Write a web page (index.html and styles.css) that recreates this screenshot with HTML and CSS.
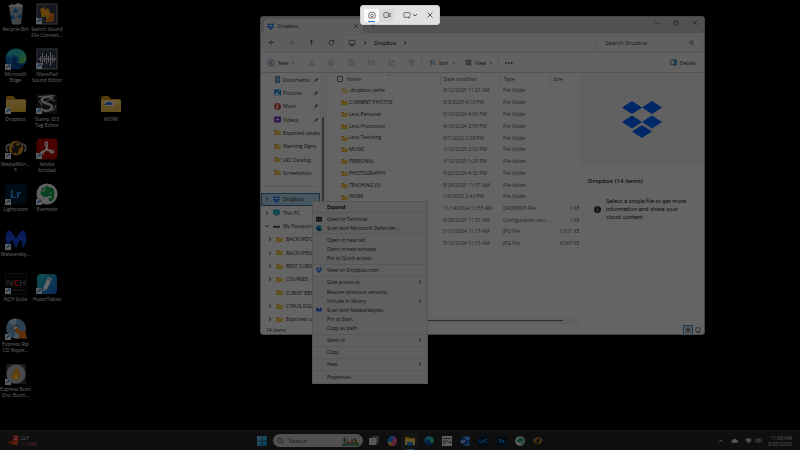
FILE: index.html
```html
<!DOCTYPE html>
<html lang="en">
<head>
<meta charset="utf-8">
<title>Dropbox</title>
<link rel="stylesheet" href="styles.css">
</head>
<body>
<svg class="defs" aria-hidden="true">
  <defs>
    <linearGradient id="edgeA" x1="0" y1="0" x2="1" y2="1"><stop offset="0" stop-color="#1fb0e0"/><stop offset=".5" stop-color="#2bc4b4"/><stop offset="1" stop-color="#7ee04a"/></linearGradient>
    <linearGradient id="edgeB" x1="0" y1="0" x2="0" y2="1"><stop offset="0" stop-color="#1b9de0"/><stop offset="1" stop-color="#0b4a9c"/></linearGradient>
    <linearGradient id="folderG" x1="0" y1="0" x2="0" y2="1"><stop offset="0" stop-color="#ffdc7a"/><stop offset="1" stop-color="#efb932"/></linearGradient>
    <linearGradient id="huion" x1="0" y1="0" x2="1" y2="1"><stop offset="0" stop-color="#23c8c0"/><stop offset="1" stop-color="#1a62d8"/></linearGradient>
    <linearGradient id="win" x1="0" y1="0" x2="1" y2="1"><stop offset="0" stop-color="#7adcff"/><stop offset="1" stop-color="#0a8ae0"/></linearGradient>
  </defs>
  <symbol id="dropbox" viewBox="0 0 40 38"><path fill="#0061fe" d="M10 0 20 6.500 10 13 0 6.500zM30 0 40 6.500 30 13 20 6.500zM10 14.500 20 21 10 27.500 0 21zM30 14.500 40 21 30 27.500 20 21zM20 24 30 30.500 20 37 10 30.500z"/></symbol>
  <symbol id="folder" viewBox="0 0 22 18"><path fill="#d99a1c" d="M1 3q0-2 2-2h5l3 3h8q2 0 2 2v4H1z"/><rect x="1" y="5" width="20" height="12" rx="1.500" fill="url(#folderG)"/></symbol>
  <symbol id="edge" viewBox="0 0 24 24"><circle cx="12" cy="12" r="11.500" fill="url(#edgeB)"/><path fill="url(#edgeA)" d="M1 10C3 2 10 .2 15 1.200c6 1.300 9 6.500 8.300 10.800-.5 3.600-4 5.500-7.300 4.500-2-.6-1.500-2-.9-3C16 10 12 7 8 7.500 4.500 8 2 9 1 10z"/><path fill="#0c3f86" d="M9 11c-2 5 1 10 6 11 3 0 6-2 7-5-3 2-7 2-9.500-.5C11 15 10.500 13 12 11.500 12 10 10 9.500 9 11z"/></symbol>
  <symbol id="evernote" viewBox="0 0 24 24"><circle cx="12" cy="12" r="11.500" fill="#eee"/><path fill="#13a34a" d="M9 4v3q0 1-1 1H5l4-4zm1 0c2-1 4 0 5 1 4 0 5 2 5 6 0 5-1 9-4 9-3 0-3-4-1-4h2c0-2-2-2-3-2-1 2-5 2-7 0C5 13 5 11 5 9h4q1 0 1-1z"/><circle cx="16" cy="11" r="1" fill="#eee"/></symbol>
  <symbol id="monkey" viewBox="0 0 24 24"><circle cx="12" cy="11" r="8" fill="#e8951d"/><path fill="none" stroke="#999" stroke-width="2" d="M3 15C-1 8 4 6 7 8M21 15c4-7 0-9-4-8"/><path fill="#2e2922" d="M9 6l4-2 4 2 1 4-3 2-1 6-3-2-4 2 1-5-2-3 3 1z"/><circle cx="14" cy="7" r="1.500" fill="#c9a46a"/></symbol>
  <symbol id="malware" viewBox="0 0 24 22"><path fill="#1846e0" d="M3 1c4 1 7 5 9 10 2-5 5-9 9-10 3 6 4 14-2 20 0-4 0-8-2-9-2 1-3 5-5 9-2-4-3-8-5-9-2 1-2 5-2 9C-1 15 0 7 3 1z"/></symbol>
  <symbol id="shortcut" viewBox="0 0 8 8"><rect width="8" height="8" fill="#eee"/><path d="M2 6V5q0-2 3-2M3.500 1.500H6.500V4.500M3 5l3-3" fill="none" stroke="#1673c7"/></symbol>
  <symbol id="right" viewBox="0 0 6 6"><path d="M2 1l2 2-2 2"/></symbol>
  <symbol id="down" viewBox="0 0 6 6"><path d="M1 2l2 2 2-2"/></symbol>
  <symbol id="pin" viewBox="0 0 6 6"><path stroke="#666" stroke-width=".6" d="M.5 5.500 2 4"/><path d="M3.500.8l1.800 1.800-1 .3-.8 1-.3 1L1.300 3l1-.3 1-.8z" fill="#666"/></symbol>
  <symbol id="close" viewBox="0 0 8 8"><path d="M1.500 1.500l5 5m0-5l-5 5"/></symbol>
  <symbol id="monitor" viewBox="0 0 10 10"><rect x="1.500" y="1.500" width="7" height="5.500" rx="1"/><path d="M3 8.500h4M5 7v1.500"/></symbol>
  <symbol id="terminal" viewBox="0 0 8 8"><rect y="1" width="8" height="6.500" rx="1" fill="#333"/><path d="M1.500 3l1.200 1.200L1.500 5.400M4 5.500h2" fill="none" stroke="#fff" stroke-width=".7"/></symbol>
</svg>

<main class="desktop">
  <ul class="shortcuts">
    <li class="c1 r1"><svg class="app" viewBox="0 0 22 22"><path fill="#a9adb0" d="M4 3l14-1-2 19q-5 1-9 0z"/><path fill="#ddd" d="M3 3l4-2 2 1 4-2 5 2-1 2H4z"/><g fill="none" stroke="#1b78d0" stroke-width="2"><path d="M8.500 10l2-3.500 2 3M14 11l1.500 3h-3M10 15H7l1-3"/></g></svg><span>Recycle Bin</span></li>
    <li class="c2 r1"><svg class="app" viewBox="0 0 22 22"><rect x="1" y="1" width="20" height="20" fill="#333a4a" stroke="#8a8e98"/><path fill="#ffad1d" d="M4 6l4-2 1 3 3-2 2 5 3 1 1-2v10H9l2-3-2-3-3 2z"/><path fill="#e8700e" d="M14 11l3 1 1-3v10H9l3-3z"/><use href="#shortcut" y="15" width="6" height="6"/></svg><span>Switch Sound File Convert...</span></li>
    <li class="c1 r2"><svg class="app" viewBox="0 0 22 22"><use href="#edge" width="22" height="22"/><use href="#shortcut" y="16" width="6" height="6"/></svg><span>Microsoft Edge</span></li>
    <li class="c2 r2"><svg class="app" viewBox="0 0 22 22"><rect x="1" y="1" width="20" height="20" fill="#333a4a" stroke="#8a8e98"/><path stroke="#ddd" d="M2 11h18M4.500 8v6M6.500 5v12M8.500 8v6M10.500 6v10M12.500 8v6M14.500 4v14M16.500 7v8M18.500 9v4"/><use href="#shortcut" y="15" width="6" height="6"/></svg><span>WavePad Sound Editor</span></li>
    <li class="c1 r3"><svg class="app" viewBox="0 0 22 22"><use href="#folder" y="2" width="22" height="18"/><use href="#shortcut" y="15" width="6" height="6"/></svg><span>Dropbox</span></li>
    <li class="c2 r3"><svg class="app" viewBox="0 0 22 22"><rect x="1" y="1" width="20" height="20" fill="#222"/><g fill="none" stroke="#ccc"><path stroke-width="2.500" d="M17 5C9 2 5 5 6 8s10 2 10 6-7 5-11 2"/><path d="M2 4l5-1M3 8l3 5M9 9l6-3 4 2M9 18l9-1 2-5M13 2l6 1"/></g><use href="#shortcut" y="15" width="6" height="6"/></svg><span>Stamp ID3 Tag Editor</span></li>
    <li class="c4 r3"><svg class="app" viewBox="0 0 22 22"><use href="#folder" y="2" width="22" height="18"/><path fill="#e8edf5" d="M5 8h6l3 2v5H5z"/><path fill="#2f73d9" d="M5 11q3-4 7-1v2H5z"/><path fill="#edc050" d="M1 13h20v6H1z"/></svg><span>WORK</span></li>
    <li class="c1 r4"><svg class="app" viewBox="0 0 22 22"><use href="#monkey" width="22" height="22"/><use href="#shortcut" y="15" width="6" height="6"/></svg><span>MediaMon... 5</span></li>
    <li class="c2 r4"><svg class="app" viewBox="0 0 22 22"><rect x=".5" y=".5" width="21" height="21" rx="4" fill="#b30b00"/><path fill="none" stroke="#fff" stroke-width="1.300" d="M10.500 4c2 0 1 5-1 8s-4 5-5 4 3-4 7-4 7 1 6 2.500-5-1.500-7-5S9 4 10.500 4z"/><use href="#shortcut" y="15" width="6" height="6"/></svg><span>Adobe Acrobat</span></li>
    <li class="c1 r5"><svg class="app" viewBox="0 0 22 22"><rect x=".5" y=".5" width="21" height="21" rx="4" fill="#001e36"/><text class="logo-lr" x="5" y="15">Lr</text><use href="#shortcut" y="16" width="6" height="6"/></svg><span>Lightroom</span></li>
    <li class="c2 r5"><svg class="app" viewBox="0 0 22 22"><use href="#evernote" width="22" height="22"/><use href="#shortcut" y="16" width="6" height="6"/></svg><span>Evernote</span></li>
    <li class="c1 r6"><svg class="app" viewBox="0 0 22 22"><use href="#malware" y="1" width="22" height="20"/><use href="#shortcut" y="16" width="6" height="6"/></svg><span>Malwareby...</span></li>
    <li class="c1 r7"><svg class="app" viewBox="0 0 22 22"><rect x=".5" y=".5" width="21" height="21" fill="#090909" stroke="#222"/><text class="logo-nch" x="1" y="13"><tspan fill="#555">N</tspan><tspan fill="#e02828">C</tspan><tspan fill="#555">H</tspan></text><path stroke="#444" d="M3 17h17"/><use href="#shortcut" y="15" width="6" height="6"/></svg><span>NCH Suite</span></li>
    <li class="c2 r7"><svg class="app" viewBox="0 0 22 22"><rect x="1" y="1" width="20" height="20" rx="4" fill="url(#huion)"/><path fill="#fff" d="M12 4l4 2-5 10-4 2 1-5z"/><path stroke="#37a5d0" d="M11.500 6l4 2"/><use href="#shortcut" y="15" width="6" height="6"/></svg><span>HuionTablet</span></li>
    <li class="c1 r8"><svg class="app" viewBox="0 0 22 22"><circle cx="11" cy="10.500" r="10" fill="#6fa4cc"/><path fill="#b5d6ee" d="M11 10L3 4a10 10 0 0 1 8-3.500zM11 11l5 9a10 10 0 0 1-7 0z"/><circle cx="10.500" cy="10" r="3" fill="#ddd" stroke="#456"/><path fill="#f07b18" d="M9 12l3-2 5 4 3-2 2 9-10-1 3-2z"/><use href="#shortcut" y="16" width="6" height="6"/></svg><span>Express Rip CD Rippe...</span></li>
    <li class="c1 r9"><svg class="app" viewBox="0 0 22 22"><rect x="1" y="1" width="20" height="20" fill="#39414f"/><circle cx="11" cy="11" r="9.500" fill="#b3b8bf"/><path fill="#f29a18" d="M11 3c1 4 5 5 4 10-1 6-9 5-8-1 0-3 4-4 4-9z"/><path fill="#ffd34d" d="M11 10c3 3 2 7 0 7s-3-3 0-7z"/><use href="#shortcut" y="16" width="6" height="6"/></svg><span>Express Burn Disc Burni...</span></li>
  </ul>

  <section class="window">
    <header class="titlebar">
      <div class="tab"><svg class="i7"><use href="#dropbox"/></svg><span>Dropbox</span><button class="icon-btn tab-close" aria-label="Close tab"><svg class="i6 line"><use href="#close"/></svg></button></div>
      <button class="icon-btn add" aria-label="New tab"><svg class="i6 line" viewBox="0 0 8 8"><path d="M4 1v6M1 4h6"/></svg></button>
      <div class="win-controls">
        <button class="icon-btn" aria-label="Minimize"><svg class="i6 line" viewBox="0 0 8 8"><path d="M1 4h6"/></svg></button>
        <button class="icon-btn" aria-label="Maximize"><svg class="i6 line" viewBox="0 0 8 8"><rect x="1.500" y="1.500" width="5" height="5" rx=".5"/></svg></button>
        <button class="icon-btn" aria-label="Close"><svg class="i6 line" viewBox="0 0 8 8"><use href="#close"/></svg></button>
      </div>
    </header>
    <nav class="navbar">
      <button class="icon-btn" aria-label="Back"><svg class="i7 line" viewBox="0 0 8 8"><path d="M7 4H1.500M4 1.500 1.500 4 4 6.500"/></svg></button>
      <button class="icon-btn faint" aria-label="Forward"><svg class="i7 line" viewBox="0 0 8 8"><path d="M1 4h5.500M4 1.500 6.500 4 4 6.500"/></svg></button>
      <button class="icon-btn" aria-label="Up"><svg class="i7 line" viewBox="0 0 8 8"><path d="M4 7V1.500M1.500 4 4 1.500 6.500 4"/></svg></button>
      <button class="icon-btn" aria-label="Refresh"><svg class="i7 line" viewBox="0 0 8 8"><path d="M6.500 3A2.700 2.700 0 1 0 6.700 4.500M6.800 1v2.200H4.600"/></svg></button>
      <div class="address"><svg class="i8 line"><use href="#monitor"/></svg><svg class="i6 line"><use href="#right"/></svg><a href="#">Dropbox</a><svg class="i6 line"><use href="#right"/></svg></div>
      <label class="search"><input type="text" placeholder="Search Dropbox" aria-label="Search Dropbox"><svg class="i6 line" viewBox="0 0 8 8"><circle cx="3.200" cy="3.200" r="2.200"/><path d="M5 5l2.200 2.200"/></svg></label>
    </nav>
    <div class="commands">
      <button class="cmd new"><svg class="i8 line blue" viewBox="0 0 10 10"><circle cx="5" cy="5" r="4"/><path d="M5 3v4M3 5h4"/></svg>New<svg class="i4 line"><use href="#down"/></svg></button>
      <button class="icon-btn off" aria-label="Cut"><svg class="i7 line" viewBox="0 0 8 8"><path d="M2 .8 5.500 6M6 .8 2.500 6"/><circle cx="2" cy="6.500" r="1"/><circle cx="6" cy="6.500" r="1"/></svg></button>
      <button class="icon-btn off" aria-label="Copy"><svg class="i7 line" viewBox="0 0 8 8"><rect x="2.500" y="1" width="4.500" height="4.500" rx="1"/><path d="M2.500 2.500H1V7h4.500V5.500"/></svg></button>
      <button class="icon-btn off" aria-label="Paste"><svg class="i7 line" viewBox="0 0 8 8"><path d="M3 7H1V1.500h5V3M2.500 1h2"/><rect x="3.500" y="3.500" width="3.500" height="3.500"/></svg></button>
      <button class="icon-btn off" aria-label="Rename"><svg class="i7 line" viewBox="0 0 8 8"><path d="M4 2H.8v4H4M6.500 2h1v4h-1M5.300 1v6M2 5l1-2"/></svg></button>
      <button class="icon-btn off" aria-label="Share"><svg class="i7 line" viewBox="0 0 8 8"><path d="M3 2H1v5h5.500V5.500M2.500 5q.5-2.500 4.500-2.500M5 1l2 1.500L5 4"/></svg></button>
      <button class="icon-btn off" aria-label="Delete"><svg class="i7 line" viewBox="0 0 8 8"><path d="M.8 2h6.400M3 2V1h2v1M1.700 2l.5 5h3.600l.5-5M3.300 3.500v2M4.700 3.500v2"/></svg></button>
      <i class="divider"></i>
      <button class="cmd sort"><svg class="i7 line blue" viewBox="0 0 8 8"><path d="M2.500 7V1.500M1 3l1.500-1.500L4 3"/><path class="accent" d="M5.500 1v5.500M4 5l1.500 1.500L7 5"/></svg>Sort<svg class="i4 line"><use href="#down"/></svg></button>
      <button class="cmd view"><svg class="i7 line" viewBox="0 0 8 8"><path d="M.8 1.500h6.400M.8 3.200h6.400M.8 4.900h6.400M.8 6.500h6.400"/></svg>View<svg class="i4 line"><use href="#down"/></svg></button>
      <i class="divider"></i>
      <button class="icon-btn" aria-label="More"><svg class="i8" viewBox="0 0 8 8"><circle cx="1.200" cy="4" r=".8"/><circle cx="4" cy="4" r=".8"/><circle cx="6.800" cy="4" r=".8"/></svg></button>
      <button class="cmd details-btn"><svg class="i7 line" viewBox="0 0 8 8"><rect x=".8" y="1.200" width="6.400" height="5.600" rx="1"/><path fill="#65b8ef" stroke="#1178c5" d="M4.800 1.200h2.400v5.600H4.800z"/></svg>Details</button>
    </div>
    <div class="content">
      <div class="sidebar">
        <ul class="tree">
          <li><svg class="i7" viewBox="0 0 8 8"><rect x="1" width="6" height="8" rx="1" fill="#5d8fb8"/><path stroke="#e8f2fa" stroke-width=".7" d="M2.500 2.500h3M2.500 4h3M2.500 5.500h3"/></svg>Documents<svg class="i6 pin"><use href="#pin"/></svg></li>
          <li><svg class="i7" viewBox="0 0 8 8"><rect y=".5" width="8" height="7" rx="1" fill="#178ad5"/><path fill="#d8f0ff" d="M0 7l3-3.500L7 7.500H0z"/><circle cx="6" cy="2.500" r=".8" fill="#fff"/></svg>Pictures<svg class="i6 pin"><use href="#pin"/></svg></li>
          <li><svg class="i7" viewBox="0 0 8 8"><circle cx="4" cy="4" r="4" fill="#d8504c"/><path fill="none" stroke="#fff" stroke-width=".8" d="M3.800 5.500v-4l1.500 1"/><circle cx="3.200" cy="5.300" r="1" fill="#fff"/></svg>Music<svg class="i6 pin"><use href="#pin"/></svg></li>
          <li><svg class="i7" viewBox="0 0 8 8"><rect y=".5" width="8" height="7" rx="1" fill="#7a35c8"/><path fill="#fff" d="M3 2.300 6 4 3 5.700z"/></svg>Videos<svg class="i6 pin"><use href="#pin"/></svg></li>
          <li><svg class="i7"><use href="#folder"/></svg>Exported catalog</li>
          <li><svg class="i7"><use href="#folder"/></svg>Warning Signs</li>
          <li><svg class="i7"><use href="#folder"/></svg>LRC Catalog</li>
          <li><svg class="i7"><use href="#folder"/></svg>Screenshots</li>
          <li class="rule"></li>
          <li class="root selected"><svg class="i6 line"><use href="#right"/></svg><svg class="i7"><use href="#dropbox"/></svg>Dropbox</li>
          <li class="root"><svg class="i6 line"><use href="#right"/></svg><svg class="i7" viewBox="0 0 8 8"><rect y=".5" width="8" height="6" rx=".7" fill="#28b0c8"/><path stroke="#578" d="M2.500 7.300h3"/></svg>This PC</li>
          <li class="root"><svg class="i6 line"><use href="#down"/></svg><svg class="i7" viewBox="0 0 8 8"><rect y="3" width="8" height="2.500" rx=".5" fill="#555"/></svg>My Passport</li>
          <li class="child"><svg class="i6 line"><use href="#right"/></svg><svg class="i7"><use href="#folder"/></svg>BACKUPDO</li>
          <li class="child"><svg class="i6 line"><use href="#right"/></svg><svg class="i7"><use href="#folder"/></svg>BACKUPESS</li>
          <li class="child"><svg class="i6 line"><use href="#right"/></svg><svg class="i7"><use href="#folder"/></svg>BEST CUBIS</li>
          <li class="child"><svg class="i6 line"><use href="#right"/></svg><svg class="i7"><use href="#folder"/></svg>COURSES</li>
          <li class="child"><svg class="i6"></svg><svg class="i7"><use href="#folder"/></svg>CUBIST BEF</li>
          <li class="child"><svg class="i6 line"><use href="#right"/></svg><svg class="i7"><use href="#folder"/></svg>CYRUS DIGI</li>
          <li class="child"><svg class="i6 line"><use href="#right"/></svg><svg class="i7"><use href="#folder"/></svg>Exported ca</li>
        </ul>
        <div class="vscroll"><i></i></div>
      </div>
      <div class="files">
        <table>
          <colgroup><col class="col-name"><col class="col-date"><col class="col-type"><col class="col-size"></colgroup>
          <thead><tr><th class="name"><input type="checkbox" aria-label="Select all">Name<svg class="i4 line sorted" viewBox="0 0 6 6"><path d="M1 4l2-2 2 2"/></svg></th><th>Date modified</th><th>Type</th><th>Size</th></tr></thead>
          <tbody>
            <tr><td class="name pale"><svg class="i7"><use href="#folder"/></svg>.dropbox.cache</td><td>8/12/2025 11:21 AM</td><td>File folder</td><td></td></tr>
            <tr><td class="name"><svg class="i7"><use href="#folder"/></svg>CURRENT PHOTOS</td><td>8/3/2025 4:10 PM</td><td>File folder</td><td></td></tr>
            <tr><td class="name"><svg class="i7"><use href="#folder"/></svg>Less Personal</td><td>5/13/2024 6:06 PM</td><td>File folder</td><td></td></tr>
            <tr><td class="name"><svg class="i7"><use href="#folder"/></svg>Less Promotion</td><td>4/18/2024 2:59 PM</td><td>File folder</td><td></td></tr>
            <tr><td class="name"><svg class="i7"><use href="#folder"/></svg>Less Teaching</td><td>9/7/2022 3:29 PM</td><td>File folder</td><td></td></tr>
            <tr><td class="name"><svg class="i7"><use href="#folder"/></svg>MUSIC</td><td>1/16/2025 2:02 PM</td><td>File folder</td><td></td></tr>
            <tr><td class="name"><svg class="i7"><use href="#folder"/></svg>PERSONAL</td><td>3/12/2025 1:25 PM</td><td>File folder</td><td></td></tr>
            <tr><td class="name"><svg class="i7"><use href="#folder"/></svg>PHOTOGRAPHY</td><td>5/23/2024 4:32 PM</td><td>File folder</td><td></td></tr>
            <tr><td class="name"><svg class="i7"><use href="#folder"/></svg>TEACHING (3)</td><td>8/25/2025 11:37 AM</td><td>File folder</td><td></td></tr>
            <tr><td class="name"><svg class="i7"><use href="#folder"/></svg>WORK</td><td>1/9/2025 2:43 PM</td><td>File folder</td><td></td></tr>
            <tr><td></td><td>11/14/2024 10:55 AM</td><td>DROPBOX File</td><td class="size">1 KB</td></tr>
            <tr><td></td><td>8/25/2025 11:37 AM</td><td>Configuration sett...</td><td class="size">1 KB</td></tr>
            <tr><td></td><td>5/13/2024 11:15 AM</td><td>JPG File</td><td class="size">7,921 KB</td></tr>
            <tr><td></td><td>5/13/2024 11:15 AM</td><td>JPG File</td><td class="size">6,067 KB</td></tr>
          </tbody>
        </table>
        <div class="hscroll"><i></i></div>
      </div>
      <aside class="details">
        <div class="preview"><svg viewBox="0 0 40 38"><use href="#dropbox"/></svg></div>
        <h2>Dropbox (14 items)</h2>
        <p class="card"><svg class="i7" viewBox="0 0 8 8"><circle cx="4" cy="4" r="4" fill="#333"/><path stroke="#fff" stroke-width=".8" d="M4 3.500v2.500M4 1.800v.8"/></svg><span>Select a single file to get more information and share your cloud content.</span></p>
      </aside>
    </div>
    <footer class="status"><span>14 items</span>
      <button class="icon-btn current" aria-label="Details view"><svg class="i6 line" viewBox="0 0 8 8"><path d="M1 1.500h6M1 3.200h6M1 4.900h6M1 6.500h6"/></svg></button>
      <button class="icon-btn" aria-label="Large icons"><svg class="i6 line" viewBox="0 0 8 8"><rect x="1" y="1" width="6" height="5" rx="1"/><path d="M2 7.200h4"/></svg></button>
    </footer>
  </section>

  <menu class="context">
    <li><button class="strong">Expand</button></li>
    <li class="sep"></li>
    <li><button><svg class="i6"><use href="#terminal"/></svg>Open in Terminal</button></li>
    <li><button><svg class="i6"><use href="#edge"/></svg>Scan with Microsoft Defender...</button></li>
    <li class="sep"></li>
    <li><button>Open in new tab</button></li>
    <li><button>Open in new window</button></li>
    <li><button>Pin to Quick access</button></li>
    <li class="sep"></li>
    <li><button><svg class="i6"><use href="#dropbox"/></svg>View on Dropbox.com</button></li>
    <li class="sep"></li>
    <li><button>Give access to<svg class="i6 line more"><use href="#right"/></svg></button></li>
    <li><button>Restore previous versions</button></li>
    <li><button>Include in library<svg class="i6 line more"><use href="#right"/></svg></button></li>
    <li><button><svg class="i6"><use href="#malware"/></svg>Scan with Malwarebytes</button></li>
    <li><button>Pin to Start</button></li>
    <li><button>Copy as path</button></li>
    <li class="sep"></li>
    <li><button>Send to<svg class="i6 line more"><use href="#right"/></svg></button></li>
    <li class="sep"></li>
    <li><button>Copy</button></li>
    <li class="sep"></li>
    <li><button>New<svg class="i6 line more"><use href="#right"/></svg></button></li>
    <li class="sep"></li>
    <li><button>Properties</button></li>
  </menu>
</main>

<footer class="taskbar">
  <div class="widget"><svg viewBox="0 0 12 12"><path fill="#d8481c" d="M0 6l3 2 3-3 5 1v5H5V9L2 10z"/><circle cx="8.500" cy="3.500" r="3.500" fill="#d83038"/><text class="badge" x="7" y="5.500">2</text></svg><p><b>LLY</b><br><span>-1.39%</span></p></div>
  <div class="center">
    <button class="icon-btn start" aria-label="Start"><svg viewBox="0 0 10 10"><path fill="url(#win)" d="M0 0h4.700v4.700H0zM5.300 0H10v4.700H5.300zM0 5.300h4.700V10H0zM5.300 5.300H10V10H5.300z"/></svg></button>
    <label class="task-search"><svg class="i7 line" viewBox="0 0 8 8"><circle cx="3.500" cy="3.500" r="2.500"/><path d="M5.500 5.500 7.500 7.500"/></svg><input type="text" placeholder="Search" aria-label="Search"><svg class="scene" viewBox="0 0 17 10"><path fill="#4c9a50" d="M0 8q4-3 8-1 4-2 9 0v3H0z"/><path fill="#a8623c" d="M2 1h1v7H2zM5 3h1v5H5zM9 3h2v5H9zM13 4h2v4h-2z"/><path fill="#37823e" d="M1 3h3v2H1zM12 2h2v3h-2z"/><path fill="#d04444" d="M6 6h2v2H6z"/><path fill="#4aa4cf" d="M3 8h9v1H3z"/></svg></label>
    <div class="apps">
      <button class="icon-btn" aria-label="Task view"><svg viewBox="0 0 10 10"><rect x="3" width="7" height="7" fill="#777"/><rect y="2" width="7.500" height="7" fill="#ddd"/></svg></button>
      <button class="icon-btn" aria-label="Copilot"><svg viewBox="0 0 10 10"><path fill="#2a8be8" d="M3 0h4L5 6 3.500 8Q0 8 0 5z"/><path fill="#ee5a88" d="M6 2h2q3 1 2 4L8 10H3l2-3z"/><path fill="#f0b43c" d="M1 6h4L4 10q-3-1-3-4z"/><path fill="#a05ae8" d="M6 0q3 0 3 3H6z"/></svg></button>
      <button class="icon-btn active" aria-label="File Explorer"><svg viewBox="0 0 10 10"><path fill="#e0a020" d="M0 1h4l1 1h5v7H0z"/><path fill="#ffd35a" d="M0 3h10v6H0z"/><path fill="#2a86dc" d="M2 6h6v3.500H2z"/></svg></button>
      <button class="icon-btn" aria-label="Edge"><svg><use href="#edge"/></svg></button>
      <button class="icon-btn" aria-label="Notes"><svg viewBox="0 0 10 10"><rect width="10" height="10" fill="#e8e8e8"/><path stroke="#555" d="M1 2.500h8M1 5h5M1 7h3"/><path fill="#888" d="M5 6l4-1v3z"/></svg></button>
      <button class="icon-btn" aria-label="Word"><svg viewBox="0 0 10 10"><rect x="3" y=".5" width="7" height="9" rx="1" fill="#4aa0ea"/><path fill="#1c5ec0" d="M3 4h7v4H3z"/><rect y="2.500" width="6" height="6" rx="1" fill="#1848a8"/><path fill="none" stroke="#fff" stroke-width=".7" d="M1.300 4l.8 3L3 4.500 3.900 7l.8-3"/></svg></button>
      <button class="icon-btn" aria-label="Lightroom Classic"><svg viewBox="0 0 10 10"><rect width="10" height="10" rx="2" fill="#001e36"/><text class="logo-task" x="1" y="7">LrC</text></svg></button>
      <button class="icon-btn" aria-label="Photoshop"><svg viewBox="0 0 10 10"><rect width="10" height="10" rx="2" fill="#001e36"/><text class="logo-task" x="2" y="7">Ps</text></svg></button>
      <button class="icon-btn" aria-label="Evernote"><svg><use href="#evernote"/></svg></button>
      <button class="icon-btn" aria-label="MediaMonkey"><svg><use href="#monkey"/></svg></button>
    </div>
  </div>
  <div class="tray">
    <svg class="i6 line" viewBox="0 0 6 6"><path d="M1 4l2-2 2 2"/></svg>
    <svg class="i7 apart" viewBox="0 0 8 8"><path fill="#ddd" d="M1 6.500q-1-2.500 1-3 2-3 4-.5 3 1 1.500 3.500z"/></svg>
    <svg class="i7 apart" viewBox="0 0 8 8"><path fill="#bbb" d="M0 3q4-4 8 0L4 7.500z"/></svg>
    <svg class="i7 line" viewBox="0 0 8 8"><path d="M.8 3v2h1.400L4 6.800V1.200L2.200 3zM5.200 2.800q1 1.200 0 2.400M6.500 1.800q1.800 2.200 0 4.400"/></svg>
    <p class="clock">11:38 AM<br>8/25/2025</p>
  </div>
</footer>

<div class="dim"></div>

<div class="snip" role="toolbar">
  <button class="mode on" aria-label="Snip"><svg class="i8 line" viewBox="0 0 10 10"><path d="M3.300 1.500h3.400l.8 1.200H8q1 0 1 1v4q0 1-1 1H2q-1 0-1-1v-4q0-1 1-1h.5z"/><circle cx="5" cy="5.500" r="1.700"/></svg></button>
  <button class="mode" aria-label="Record"><svg class="i8 line" viewBox="0 0 10 10"><rect x="1" y="2" width="5.500" height="6" rx="1"/><path d="M6.500 4.200 9 2.800v4.400L6.500 5.800"/></svg></button>
  <button class="shape" aria-label="Snipping mode"><svg class="i8 line" viewBox="0 0 10 10"><path d="M6 8H2.200Q1 8 1 6.800V3.200Q1 2 2.200 2h5.600Q9 2 9 3.200V6M7.500 6.500v3M6 8h3"/></svg><svg class="i6 line"><use href="#down"/></svg></button>
  <button class="quit" aria-label="Close"><svg class="i8 line"><use href="#close"/></svg></button>
</div>
</body>
</html>
```
FILE: styles.css
```css
* { box-sizing: border-box; }
html, body { height: 100%; }
body {
  margin: 0;
  display: flex;
  flex-direction: column;
  overflow: hidden;
  background: #000;
  color: #1b1b1b;
  font: 5px/6px "Open Sans", "Noto Sans", sans-serif;
}
ul, menu { list-style: none; margin: 0; padding: 0; }
p, h2 { margin: 0; }
button, input { font: inherit; color: inherit; border: 0; background: none; padding: 0; margin: 0; }
a { color: inherit; text-decoration: none; }
svg { display: block; flex: none; }
.defs { position: absolute; width: 0; height: 0; }
.i4 { width: 4px; height: 4px; }
.i6 { width: 6px; height: 6px; }
.i7 { width: 7px; height: 7px; }
.i8 { width: 8px; height: 8px; }
.line { fill: none; stroke: #333; stroke-width: 0.8; }
.blue { stroke: #2a5f8c; }
.accent { stroke: #1a86d8; }
.icon-btn { display: flex; align-items: center; justify-content: center; width: 20px; flex: none; }

/* Desktop */
.desktop { flex: 1; min-height: 0; position: relative; }
.shortcuts {
  display: grid;
  grid-template-columns: 31px 32px 32px 32px;
  grid-auto-rows: 45px;
  padding-top: 3px;
  color: #eee;
  text-align: center;
}
.shortcuts li { display: flex; flex-direction: column; align-items: center; gap: 1px; }
.app { width: 22px; height: 22px; }
.c1 { grid-column: 1; } .c2 { grid-column: 2; } .c4 { grid-column: 4; }
.r1 { grid-row: 1; } .r2 { grid-row: 2; } .r3 { grid-row: 3; }
.r4 { grid-row: 4; } .r5 { grid-row: 5; } .r6 { grid-row: 6; }
.r7 { grid-row: 7; } .r8 { grid-row: 8; } .r9 { grid-row: 9; }
.logo-lr { font: bold 11px "Open Sans", sans-serif; fill: #31a8ff; }
.logo-nch { font: bold 9px "Open Sans", sans-serif; }
.logo-task { font: bold 5px "Open Sans", sans-serif; fill: #31a8ff; }
.badge { font: 5px "Open Sans", sans-serif; fill: #fff; }

/* Explorer window */
.window {
  position: absolute;
  left: 260px;
  top: 16px;
  width: 445px;
  height: 319px;
  display: flex;
  flex-direction: column;
  overflow: hidden;
  border: 1px solid #b0b0b0;
  border-radius: 3px;
  background: #fbfbfb;
}
.titlebar { display: flex; height: 16px; flex: none; background: #cbcbcb; }
.tab {
  display: flex;
  align-items: center;
  gap: 4px;
  width: 99px;
  margin: 2px 0 0 3px;
  padding-left: 3px;
  border-radius: 3px 3px 0 0;
  background: #e8e8e8;
}
.tab-close { width: 14px; margin-left: auto; }
.add { width: 20px; }
.win-controls { display: flex; align-items: flex-start; margin-left: auto; padding-top: 3px; }
.win-controls .icon-btn { width: 19px; }
.navbar {
  display: flex;
  align-items: center;
  height: 20px;
  flex: none;
  border-bottom: 1px solid #d5d5d5;
  background: #e8e8e8;
  font: 6px/8px Roboto, "Open Sans", sans-serif;
}
.faint { opacity: 0.4; }
.address {
  flex: 1;
  display: flex;
  align-items: center;
  gap: 6px;
  height: 14px;
  margin: 0 3px 0 2px;
  padding-left: 5px;
  border-radius: 2px;
  background: #f0f0f0;
}
.search {
  display: flex;
  align-items: center;
  width: 102px;
  height: 14px;
  margin-right: 4px;
  padding: 0 5px 0 7px;
  border-radius: 2px;
  background: #f0f0f0;
}
.search input, .task-search input { flex: 1; min-width: 0; height: 8px; }
input::placeholder { color: #555; opacity: 1; }
.commands { display: flex; align-items: center; height: 20px; flex: none; background: #f5f5f5; border-bottom: 1px solid #d0d0d0; }
.cmd { display: flex; align-items: center; gap: 3px; }
.new { width: 40px; padding-left: 6px; }
.off { opacity: 0.45; }
.off .line { stroke: #38607f; }
.divider { width: 1px; height: 12px; background: #dcdcdc; }
.sort { width: 35px; padding-left: 7px; }
.view { width: 41px; padding-left: 8px; }
.details-btn { margin-left: auto; padding-right: 8px; }
.content { flex: 1; min-height: 0; display: flex; }

/* Navigation tree */
.sidebar { display: flex; width: 66px; flex: none; }
.tree {
  flex: 1;
  min-width: 0;
  display: grid;
  grid-template-rows: repeat(19, minmax(0, 1fr));
}
.tree li {
  display: flex;
  align-items: center;
  gap: 2px;
  min-width: 0;
  overflow: hidden;
  padding-left: 13px;
  white-space: nowrap;
}
.tree .root { padding-left: 3px; gap: 3px; }
.tree .child { padding-left: 6px; gap: 3px; }
.tree .pin { margin-left: auto; margin-right: 1px; }
.tree .rule { margin: 6px 3px; background: #d8d8d8; }
.tree .selected { border: 1px solid #3f78a5; padding-left: 2px; background: #b5d6ee; }
.vscroll { width: 7px; padding: 44px 0 20px 2px; background: #efefef; }
.vscroll i { display: block; width: 2px; height: 145px; border-radius: 1px; background: #858585; }

/* File list */
.files { flex: 1; min-width: 0; display: flex; flex-direction: column; overflow: hidden; }
table { width: 252px; height: 176px; table-layout: fixed; border-collapse: collapse; margin-left: 1px; }
.col-name { width: 112px; }
.col-date { width: 60px; }
.col-type { width: 50px; }
th { height: 12px; padding: 0 0 0 3px; border-right: 1px solid #dedede; font-weight: 400; text-align: left; color: #3c5064; }
th:last-child { border-right: 0; }
td { padding: 0 0 0 3px; color: #555; white-space: nowrap; line-height: 7px; }
.name { padding-left: 13px; color: #1b1b1b; }
th.name { position: relative; padding-left: 9px; color: #3c5064; }
.name svg, .name input { display: inline-block; vertical-align: middle; }
.name svg { margin-right: 1px; }
.name input {
  appearance: none;
  width: 6px;
  height: 6px;
  margin-right: 4px;
  border: 1px solid #777;
  border-radius: 1px;
}
.name .sorted { position: absolute; right: 48px; top: 0; }
.pale svg { opacity: 0.6; }
.size { text-align: right; }
.hscroll { height: 7px; margin: auto 0 2px; padding-top: 3px; background: #f0f0f0; }
.hscroll i { display: block; height: 1px; margin-right: 16px; background: #777; }

/* Details pane */
.details { width: 125px; flex: none; }
.preview { display: flex; align-items: center; justify-content: center; height: 93px; background: #f3f3f3; }
.preview svg { width: 40px; height: 38px; }
.details h2 { margin: 11px 9px 6px; font: 600 6px/8px "Open Sans", sans-serif; }
.card {
  display: flex;
  align-items: center;
  gap: 5px;
  margin: 0 9px;
  padding: 5px;
  border: 1px solid #f0f0f0;
  border-radius: 2px;
  font: 6px/8px Roboto, "Open Sans", sans-serif;
}
.status { display: flex; align-items: center; height: 8px; flex: none; padding: 0 1px 0 5px; color: #2c405c; }
.status span { flex: 1; }
.status .icon-btn { width: 10px; height: 10px; }
.status .current { border: 1px solid #3a8fd0; background: #cfe6f8; }

/* Context menu */
.context {
  position: absolute;
  left: 312px;
  top: 201px;
  width: 116px;
  height: 183px;
  display: flex;
  flex-direction: column;
  padding-bottom: 2px;
  border: 1px solid #d0d0d0;
  background: #eee;
}
.context li { flex: 1; min-height: 0; display: flex; }
.context .sep { flex: none; height: 3px; padding: 1px 0; background: #dadada content-box; }
.context button { flex: 1; display: flex; align-items: center; gap: 5px; padding: 0 4px 0 14px; }
.context button svg:first-child:not(.more) { margin-left: -11px; }
.context .more { margin-left: auto; }
.strong { font-weight: 700; }

/* Taskbar */
.taskbar {
  display: grid;
  grid-template-columns: 1fr auto 1fr;
  align-items: center;
  height: 20px;
  flex: none;
  border-top: 1px solid #303030;
  background: #262626;
  color: #ddd;
}
.widget { display: flex; align-items: center; gap: 2px; padding-left: 8px; }
.widget svg { width: 11px; height: 11px; }
.widget b { font-weight: 400; }
.widget span { color: #e06070; }
.center { display: flex; align-items: center; gap: 2px; }
.start { width: 18px; }
.center .icon-btn svg { width: 10px; height: 10px; }
.task-search {
  display: flex;
  align-items: center;
  gap: 5px;
  width: 90px;
  height: 13px;
  padding: 0 4px;
  border-radius: 7px;
  background: #c8c8c8;
  font: 6px/8px Roboto, "Open Sans", sans-serif;
}
.scene { width: 17px; height: 10px; }
.apps { display: flex; width: 183px; }
.apps .icon-btn { flex: 1; width: auto; height: 18px; }
.apps .active { border-radius: 2px; background: #333 linear-gradient(#4cb8f0, #4cb8f0) center bottom / 7px 1px no-repeat; }
.tray { display: flex; align-items: center; justify-content: flex-end; gap: 3px; padding-right: 8px; }
.tray .line { stroke: #ddd; }
.tray .apart { margin-left: 4px; }
.clock { width: 27px; text-align: right; }

/* Capture overlay */
.dim { position: fixed; inset: 0; background: rgba(0, 0, 0, 0.6); pointer-events: none; }
.snip {
  position: fixed;
  left: 50%;
  top: 5px;
  transform: translateX(-50%);
  display: flex;
  align-items: center;
  width: 80px;
  height: 20px;
  padding: 0 3px;
  border: 1px solid #cfcfcf;
  border-radius: 3px;
  background: #e2e2e2;
}
.mode { display: flex; align-items: center; justify-content: center; width: 15px; height: 13px; background: #d8d8d8; }
.mode.on {
  border-radius: 2px;
  background: #fafafa linear-gradient(#1a80d8, #1a80d8) center bottom / 7px 1px no-repeat;
}
.shape { display: flex; align-items: center; gap: 1px; margin-left: 9px; }
.quit { margin-left: auto; padding-right: 2px; }
```
